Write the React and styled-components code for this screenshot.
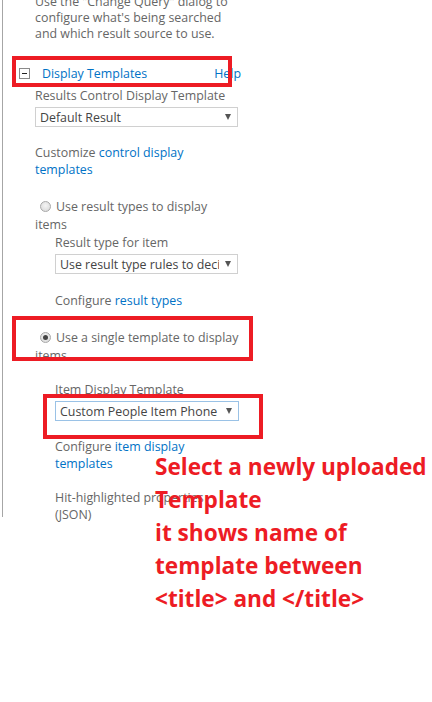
import styled, { createGlobalStyle } from 'styled-components'

const GlobalStyle = createGlobalStyle`
  html, body {
    margin: 0;
    padding: 0;
    background: #fff;
  }
  body {
    font-family: "Open Sans", "Noto Sans", sans-serif;
    font-size: 12.4px;
    color: #666;
  }
`

const Page = styled.div`
  position: relative;
  width: 432px;
  height: 702px;
  overflow: hidden;
`

const Panel = styled.div`
  margin-left: 2px;
  width: 214px;
  padding-left: 32px;
  border-left: 1px solid #a6a6a6;
  height: 523px;
`

const Description = styled.p`
  margin: -6px 0 0;
  line-height: 16px;
  width: 205px;
`

const SectionHeader = styled.div`
  display: flex;
  align-items: center;
  height: 20px;
  margin: 21px 0 0 -16px;
  width: 222px;
`

const Toggle = styled.span`
  display: inline-flex;
  align-items: center;
  justify-content: center;
  width: 9px;
  height: 9px;
  border: 1px solid #8a8a8a;
  margin-right: 12px;
  &::before {
    content: '';
    width: 5px;
    height: 1px;
    background: #222;
  }
`

const HeaderTitle = styled.span`
  color: #0072c6;
  flex: 1;
`

const Help = styled.span`
  color: #0072c6;
`

const Label = styled.div`
  box-sizing: border-box;
  width: 200px;
  line-height: 17px;
  margin-top: ${p => p.$gap || 0}px;
  padding-left: ${p => (p.$indent ? 20 : 0)}px;
`

const Link = styled.span`
  color: #0072c6;
`

const Dropdown = styled.div`
  display: flex;
  align-items: center;
  box-sizing: border-box;
  width: ${p => p.$width}px;
  height: 20px;
  margin-top: ${p => p.$gap}px;
  margin-left: ${p => (p.$indent ? 20 : 0)}px;
  border: 1px solid ${p => (p.$focused ? '#9ac2e6' : '#d0d0d0')};
  padding: 0 6px 0 4px;
  color: #444;
`

const DropdownText = styled.span`
  flex: 1;
  min-width: 0;
  white-space: nowrap;
  overflow: hidden;
`

const Caret = styled.span`
  flex: none;
  margin-left: 6px;
  border-left: 3.5px solid transparent;
  border-right: 3.5px solid transparent;
  border-top: 6px solid #555;
`

const Option = styled.p`
  margin: ${p => p.$gap}px 0 0;
  line-height: 18px;
  width: 206px;
`

const Radio = styled.span`
  display: inline-block;
  vertical-align: -1px;
  box-sizing: border-box;
  width: 11px;
  height: 11px;
  margin: 0 5px;
  border-radius: 50%;
  border: 1px solid #a8a8a8;
  background: radial-gradient(circle at 50% 40%, #f4f4f4, #d6d6d6);
  position: relative;
  ${p =>
    p.$checked &&
    `
    &::after {
      content: '';
      position: absolute;
      left: 2px;
      top: 2px;
      width: 5px;
      height: 5px;
      border-radius: 50%;
      background: #444;
    }
  `}
`

const Highlight = styled.div`
  position: absolute;
  box-sizing: border-box;
  left: ${p => p.$x}px;
  top: ${p => p.$y}px;
  width: ${p => p.$w}px;
  height: ${p => p.$h}px;
  border: 4px solid #ed1c24;
  pointer-events: none;
`

const Note = styled.div`
  position: absolute;
  left: 155px;
  top: 450px;
  font-family: "Open Sans", "Noto Sans", sans-serif;
  font-weight: 700;
  font-size: 22.6px;
  line-height: 33px;
  color: #ed1c24;
  white-space: nowrap;
`

export default function App() {
  return (
    <Page>
      <GlobalStyle />
      <Panel>
        <Description>
          Use the "Change Query" dialog to configure what's being searched and
          which result source to use.
        </Description>

        <SectionHeader>
          <Toggle />
          <HeaderTitle>Display Templates</HeaderTitle>
          <Help>Help</Help>
        </SectionHeader>

        <Label $gap={4}>Results Control Display Template</Label>
        <Dropdown $width={203} $gap={3}>
          <DropdownText>Default Result</DropdownText>
          <Caret />
        </Dropdown>

        <Label $gap={17}>
          Customize <Link>control display templates</Link>
        </Label>

        <Option $gap={20}>
          <Radio />
          Use result types to display items
        </Option>
        <Label $indent>Result type for item</Label>
        <Dropdown $indent $width={183} $gap={3}>
          <DropdownText>Use result type rules to decide</DropdownText>
          <Caret />
        </Dropdown>
        <Label $indent $gap={18}>
          Configure <Link>result types</Link>
        </Label>

        <Option $gap={20}>
          <Radio $checked />
          Use a single template to display items
        </Option>
        <Label $indent $gap={16}>Item Display Template</Label>
        <Dropdown $indent $focused $width={184} $gap={3}>
          <DropdownText>Custom People Item Phone</DropdownText>
          <Caret />
        </Dropdown>
        <Label $indent $gap={17}>
          Configure <Link>item display templates</Link>
        </Label>
        <Label $indent $gap={17}>
          Hit-highlighted properties (JSON)
        </Label>
      </Panel>

      <Highlight $x={12} $y={56} $w={220} $h={31} />
      <Highlight $x={12} $y={316} $w={241} $h={45} />
      <Highlight $x={43} $y={394} $w={220} $h={45} />

      <Note>
        Select a newly uploaded
        <br />
        Template
        <br />
        it shows name of
        <br />
        template between
        <br />
        {'<title> and </title>'}
      </Note>
    </Page>
  )
}
